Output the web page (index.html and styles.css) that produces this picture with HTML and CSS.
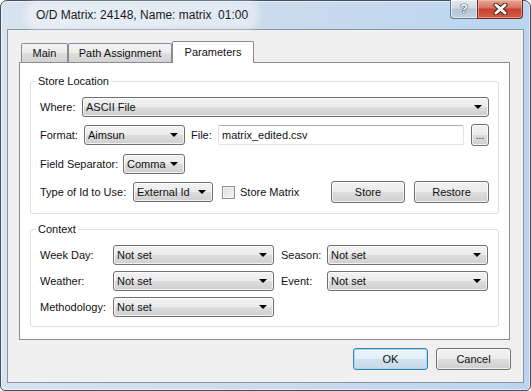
FILE: index.html
```html
<!DOCTYPE html>
<html lang="en">
<head>
    <meta charset="UTF-8">
    <title>O/D Matrix: 24148, Name: matrix 01:00</title>
    <link rel="stylesheet" href="styles.css">
</head>
<body>
    <div class="window">
        <!-- Barra de título -->
        <div class="titlebar">
            <span class="title">O/D Matrix: 24148, Name: matrix&nbsp; 01:00</span>
            <div class="caption-btns">
                <div class="cap-help">?</div>
                <div class="cap-close">
                    <svg width="15" height="12" viewBox="0 0 15 12">
                        <path d="M3 2 L12 10 M12 2 L3 10" stroke="#4b1c14" stroke-width="5" stroke-linecap="round"/>
                        <path d="M3 2 L12 10 M12 2 L3 10" stroke="#fff" stroke-width="3" stroke-linecap="round"/>
                    </svg>
                </div>
            </div>
        </div>

        <div class="client">
            <div class="tabs">
                <div class="tab tab-main">Main</div>
                <div class="tab tab-path">Path Assignment</div>
                <div class="tab tab-params active">Parameters</div>
            </div>

            <div class="pane">
                <fieldset class="group group-store">
                    <legend>Store Location</legend>
                    <div class="row">
                        <span class="lbl lbl-where">Where:</span>
                        <div class="combo combo-where">ASCII File</div>
                    </div>
                    <div class="row">
                        <span class="lbl lbl-format">Format:</span>
                        <div class="combo combo-format">Aimsun</div>
                        <span class="lbl lbl-file">File:</span>
                        <div class="textbox">matrix_edited.csv</div>
                        <button class="btn btn-browse">...</button>
                    </div>
                    <div class="row">
                        <span class="lbl lbl-sep">Field Separator:</span>
                        <div class="combo combo-sep">Comma</div>
                    </div>
                    <div class="row">
                        <span class="lbl lbl-idtype">Type of Id to Use:</span>
                        <div class="combo combo-idtype">External Id</div>
                        <span class="checkbox"></span>
                        <span class="lbl lbl-check">Store Matrix</span>
                        <button class="btn btn-store">Store</button>
                        <button class="btn btn-restore">Restore</button>
                    </div>
                </fieldset>

                <fieldset class="group group-context">
                    <legend>Context</legend>
                    <div class="context-grid">
                        <span class="lbl">Week Day:</span>
                        <div class="combo">Not set</div>
                        <span class="lbl lbl-right">Season:</span>
                        <div class="combo">Not set</div>

                        <span class="lbl">Weather:</span>
                        <div class="combo">Not set</div>
                        <span class="lbl lbl-right">Event:</span>
                        <div class="combo">Not set</div>

                        <span class="lbl">Methodology:</span>
                        <div class="combo">Not set</div>
                    </div>
                </fieldset>
            </div>

            <!-- Botones del diálogo -->
            <div class="footer">
                <button class="btn btn-dialog btn-default">OK</button>
                <button class="btn btn-dialog">Cancel</button>
            </div>
        </div>
    </div>
</body>
</html>
```

FILE: styles.css
```css
/* Ventana estilo Windows 7 */
body {
    margin: 0;
    background: #ffffff;
    font-family: "Liberation Sans", Arial, sans-serif;
    font-size: 11px;
    color: #111;
}

.window {
    width: 531px;
    height: 391px;
    box-sizing: border-box;
    border: 1px solid #45505c;
    border-radius: 7px 7px 5px 5px;
    background: linear-gradient(to right, #d7e3ef 0%, #cddced 45%, #bad5f1 100%);
    box-shadow: inset 0 0 0 1px rgba(255, 255, 255, 0.55);
    padding: 0 6px 7px 6px;
}

.titlebar {
    height: 28px;
    display: flex;
    align-items: center;
}

.title {
    margin-left: 23px;
    padding: 3px 6px;
    font-size: 12px;
    color: #1a1a1a;
    background: rgba(255, 255, 255, 0.4);
    box-shadow: 0 0 6px 5px rgba(255, 255, 255, 0.4);
    border-radius: 8px;
}

.caption-btns {
    margin-left: auto;
    margin-right: 1px;
    align-self: flex-start;
    margin-top: -1px;
    display: flex;
}

.cap-help {
    width: 27px;
    height: 19px;
    box-sizing: border-box;
    border: 1px solid #6b7886;
    border-top: none;
    border-right: none;
    border-radius: 0 0 0 4px;
    background: linear-gradient(#e4eaf1 0%, #cfd9e4 45%, #b6c5d6 50%, #c3d2e2 100%);
    box-shadow: inset 0 0 0 1px rgba(255, 255, 255, 0.5);
    color: #fff;
    font-weight: bold;
    font-size: 13px;
    line-height: 18px;
    text-align: center;
    text-shadow: 0 0 1px #2d3a47, 0 0 1px #2d3a47, 0 0 1px #2d3a47;
}

.cap-close {
    width: 46px;
    height: 19px;
    box-sizing: border-box;
    border: 1px solid #6e2a20;
    border-top: none;
    border-radius: 0 0 4px 0;
    background: linear-gradient(#e7a697 0%, #d7725f 45%, #c5412d 50%, #d35f48 100%);
    box-shadow: inset 0 0 0 1px rgba(255, 210, 200, 0.45);
    display: flex;
    align-items: center;
    justify-content: center;
}

.client {
    height: 354px;
    box-sizing: border-box;
    border: 1px solid #8a95a3;
    background: #f0f0f0;
    padding: 11px 12px 11px 11px;
    display: flex;
    flex-direction: column;
}

/* Pestañas */
.tabs {
    height: 21px;
    display: flex;
    align-items: flex-end;
    padding-left: 2px;
}

.tab {
    box-sizing: border-box;
    height: 19px;
    border: 1px solid #898c95;
    border-bottom: none;
    border-radius: 2px 2px 0 0;
    background: linear-gradient(#f3f3f3 0%, #ebebeb 50%, #dedede 52%, #d3d3d3 100%);
    text-align: center;
    line-height: 18px;
}

.tab-main { width: 47px; }
.tab-path { width: 104px; }
.tab-params { width: 82px; }

.tab.active {
    height: 22px;
    margin-bottom: -1px;
    position: relative;
    z-index: 1;
    background: #ffffff;
    line-height: 20px;
}

.pane {
    width: 491px;
    height: 278px;
    box-sizing: border-box;
    border: 1px solid #898c95;
    background: #ffffff;
    padding: 12px 10px;
}

/* Grupos */
.group {
    margin: 0;
    min-inline-size: 0;
    border: 1px solid #d5dfe5;
    border-radius: 3px;
    padding: 8px 9px 10px 9px;
}

.group legend {
    padding: 0 2px;
    margin-left: -4px;
    line-height: 13px;
}

.group-context {
    margin-top: 9px;
    padding: 9px 9px 9px 9px;
}

.row {
    height: 22px;
    display: flex;
    align-items: center;
}

.row + .row { margin-top: 6px; }
.row:nth-of-type(3) { margin-top: 7px; }

.lbl {
    white-space: nowrap;
}

.lbl-where { width: 42px; }
.lbl-format { width: 44px; }
.lbl-file { width: 27px; margin-left: 6px; }
.lbl-sep { width: 83px; }
.lbl-idtype { width: 93px; }
.lbl-check { margin-left: 5px; }

/* Combos */
.combo {
    position: relative;
    height: 20px;
    box-sizing: border-box;
    border: 1px solid #707070;
    border-radius: 3px;
    background: linear-gradient(#f2f2f2 0%, #ebebeb 50%, #dddddd 50%, #cfcfcf 100%);
    box-shadow: inset 0 0 0 1px rgba(255, 255, 255, 0.7);
    padding-left: 3px;
    line-height: 18px;
    white-space: nowrap;
}

.combo::after {
    content: "";
    position: absolute;
    right: 6px;
    top: 7px;
    border-left: 4px solid transparent;
    border-right: 4px solid transparent;
    border-top: 4px solid #000;
}

.combo-where { flex: 1; }
.combo-format { width: 101px; }
.combo-sep { width: 62px; }
.combo-idtype { width: 80px; }

.textbox {
    width: 246px;
    height: 20px;
    box-sizing: border-box;
    border: 1px solid #e2e3ea;
    border-top-color: #abadb3;
    border-radius: 2px;
    background: #ffffff;
    padding-left: 3px;
    line-height: 18px;
}

.checkbox {
    width: 13px;
    height: 13px;
    box-sizing: border-box;
    margin-left: 9px;
    border: 1px solid #8e8f8f;
    background: linear-gradient(135deg, #dcdcdc, #f6f6f6);
    box-shadow: inset 0 0 0 1px #f4f4f4;
}

/* Botones */
.btn {
    height: 22px;
    box-sizing: border-box;
    border: 1px solid #707070;
    border-radius: 3px;
    background: linear-gradient(#f2f2f2 0%, #ebebeb 50%, #dddddd 50%, #cfcfcf 100%);
    box-shadow: inset 0 0 0 1px rgba(255, 255, 255, 0.7);
    font-family: "Liberation Sans", Arial, sans-serif;
    font-size: 11px;
    color: #111;
    padding: 0;
}

.btn-browse {
    width: 18px;
    margin-left: auto;
    font-size: 10px;
    line-height: 16px;
    padding-top: 2px;
}

.btn-store { width: 74px; margin-left: auto; }
.btn-restore { width: 75px; margin-left: 9px; }

.context-grid {
    display: grid;
    grid-template-columns: 73px 161px 53px 161px;
    grid-auto-rows: 20px;
    row-gap: 6px;
    align-items: center;
}

.lbl-right { padding-left: 7px; }

.footer {
    margin-top: 8px;
    display: flex;
    justify-content: flex-end;
    gap: 8px;
}

.btn-dialog { width: 75px; }

.btn-default {
    border-color: #3c7fb1;
    box-shadow: inset 0 0 0 1px #9edcf5;
    background: linear-gradient(#eef6fb 0%, #e2eef6 50%, #d2e2ee 50%, #c6d9e8 100%);
}
```
